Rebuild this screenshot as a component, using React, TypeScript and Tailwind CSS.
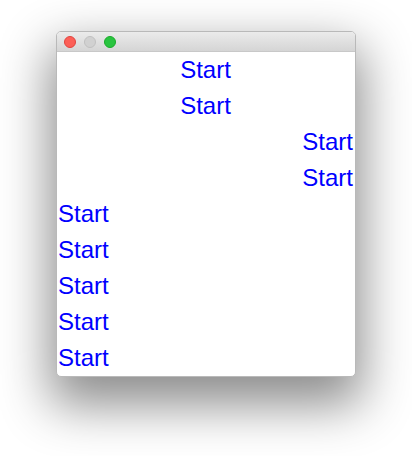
import React from 'react';

type Align = 'center' | 'right' | 'left';

const rows: Align[] = ['center', 'center', 'right', 'right', 'left', 'left', 'left', 'left', 'left'];

const alignClass: Record<Align, string> = {
  center: 'text-center',
  right: 'text-right',
  left: 'text-left',
};

const App: React.FC = () => {
  return (
    <div className="w-[412px] h-[456px] bg-white pt-[31px] pl-[56px]" style={{ fontFamily: '"Liberation Sans", Arial, sans-serif' }}>
      <div className="w-[300px] rounded-[5px] bg-white overflow-hidden border border-[#b9b9b9] shadow-[0_22px_50px_6px_rgba(0,0,0,0.45)]">
        {/* title bar */}
        <div className="h-[20px] flex items-center gap-[8px] pl-[7px] bg-gradient-to-b from-[#ebebeb] to-[#d5d5d5] border-b border-[#c8c8c8]">
          <span className="w-[12px] h-[12px] rounded-full bg-[#fc5f57] border border-[#e0443e]" />
          <span className="w-[12px] h-[12px] rounded-full bg-[#d1d1d1] border border-[#c0c0c0]" />
          <span className="w-[12px] h-[12px] rounded-full bg-[#29c440] border border-[#1aab29]" />
        </div>
        <div className="pl-[1px] pr-[2px]">
          {rows.map((a, i) => (
            <div key={i} className={`h-[36px] leading-[36px] text-[24px] text-[#0000ff] ${alignClass[a]}`}>
              Start
            </div>
          ))}
        </div>
      </div>
    </div>
  );
};

export default App;
